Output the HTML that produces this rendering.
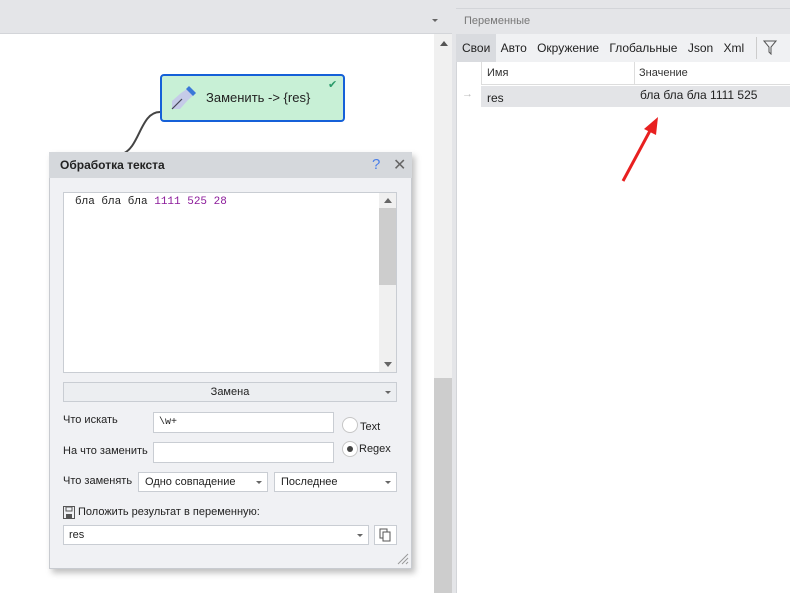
<!DOCTYPE html><html><head><meta charset="utf-8"><style>
*{box-sizing:border-box;margin:0;padding:0}
body{width:790px;height:593px;overflow:hidden;background:#fff;font-family:"Liberation Sans",sans-serif;font-size:12px;color:#222;position:relative}
.a{position:absolute}
.inp{position:absolute;background:#fff;border:1px solid #c9cdd3}
.dd{position:absolute;width:0;height:0;border-left:3px solid transparent;border-right:3px solid transparent;border-top:3px solid #666}
</style></head><body>
<div class="a" style="left:0;top:0;width:455px;height:34px;background:#e4e5e8;border-bottom:1px solid #d3d5d9"></div>
<div class="dd" style="left:432px;top:19px"></div>
<div class="a" style="left:434px;top:34px;width:18px;height:559px;background:#f0f0f0"></div>
<div class="a" style="left:434px;top:378px;width:18px;height:215px;background:#cdcdcd"></div>
<div class="a" style="left:440px;top:41px;border-left:4px solid transparent;border-right:4px solid transparent;border-bottom:5px solid #555"></div>
<div class="a" style="left:452px;top:0;width:4px;height:593px;background:#e4e5e8"></div>
<div class="a" style="left:456px;top:0;width:334px;height:593px;background:#fff;border-left:1px solid #d3d5d9"></div>
<div class="a" style="left:456px;top:0;width:334px;height:8px;background:#e4e5e8"></div>
<div class="a" style="left:456px;top:8px;width:334px;height:26px;background:#e4e5e8;border-top:1px solid #d3d5d9;color:#777;font-size:11px;padding:6px 0 0 8px">Переменные</div>
<div class="a" style="left:456px;top:34px;width:334px;height:28px;background:#f0f1f3"></div>
<div class="a" style="left:456px;top:34px;width:40px;height:28px;background:#d9dbdf"></div>
<div class="a" style="left:462px;top:41px;font-size:12px;word-spacing:7px;color:#222">Свои Авто Окружение Глобальные Json Xml</div>
<div class="a" style="left:756px;top:37px;width:1px;height:22px;background:#ccc"></div>
<svg class="a" style="left:763px;top:40px" width="14" height="15"><path d="M1 1H13L8 7V14L6 12V7Z" fill="none" stroke="#555"/></svg>
<div class="a" style="left:481px;top:62px;width:309px;height:23px;border-left:1px solid #ddd;border-bottom:1px solid #ddd;font-size:11px;color:#333"><span class="a" style="left:5px;top:5px">Имя</span><span class="a" style="left:152px;top:0;width:1px;height:23px;background:#ddd"></span><span class="a" style="left:157px;top:5px">Значение</span></div>
<div class="a" style="left:481px;top:86px;width:309px;height:21px;background:#e3e4e7;font-size:12px"><span class="a" style="left:6px;top:5px">res</span><span class="a" style="left:159px;top:2px">бла бла бла 1111 525</span></div>
<div class="a" style="left:462px;top:88px;color:#bbb;font-size:11px">→</div>
<svg class="a" style="left:618px;top:115px" width="42" height="70"><path d="M5 66L34 12" stroke="#e82020" stroke-width="3"/><path d="M40 2L26 14L38 20Z" fill="#e82020"/></svg>
<svg class="a" style="left:110px;top:108px" width="55" height="50"><path d="M50 4C30 4 30 40 12 46" fill="none" stroke="#444" stroke-width="2"/></svg>
<div class="a" style="left:160px;top:74px;width:185px;height:48px;background:#c8f0d6;border:2px solid #1560d8;border-radius:4px"></div>
<svg class="a" style="left:168px;top:83px" width="30" height="30"><path d="M22 4L28 10L20 17L12 26L4 26L4 18L13 10Z" fill="#c5cbe8"/><path d="M21 3L28 10L25 13L18 6Z" fill="#3a78d8"/><path d="M4 26L14 16" stroke="#445" stroke-width="1.2"/></svg>
<div class="a" style="left:206px;top:90px;font-size:13px;color:#222">Заменить -&gt; {res}</div>
<div class="a" style="left:328px;top:78px;color:#2a9a6a;font-size:11px">✔</div>
<div class="a" style="left:49px;top:152px;width:363px;height:417px;background:#f0f1f4;border:1px solid #c8cbd0;box-shadow:3px 4px 6px rgba(0,0,0,.25)"></div>
<div class="a" style="left:49px;top:152px;width:363px;height:26px;background:#d5d8dc"></div>
<div class="a" style="left:60px;top:158px;font-weight:bold;font-size:12px;color:#222">Обработка текста</div>
<div class="a" style="left:372px;top:156px;color:#4a7ee8;font-size:15px">?</div>
<div class="a" style="left:393px;top:155px;color:#666;font-size:16px">✕</div>
<div class="inp" style="left:63px;top:192px;width:334px;height:181px"></div>
<div class="a" style="left:379px;top:193px;width:17px;height:179px;background:#f0f0f0"></div>
<div class="a" style="left:379px;top:208px;width:17px;height:77px;background:#cdcdcd"></div>
<div class="a" style="left:384px;top:198px;border-left:4px solid transparent;border-right:4px solid transparent;border-bottom:5px solid #666"></div>
<div class="a" style="left:384px;top:362px;border-left:4px solid transparent;border-right:4px solid transparent;border-top:5px solid #666"></div>
<div class="a" style="left:75px;top:196px;font-family:'Liberation Mono',monospace;font-size:11px">бла бла бла <span style="color:#8b1a9a">1111 525 28</span></div>
<div class="a" style="left:63px;top:382px;width:334px;height:20px;background:#eceef1;border:1px solid #c9cdd3;text-align:center;font-size:11px;padding-top:3px">Замена</div>
<div class="dd" style="left:385px;top:391px"></div>
<div class="a" style="left:63px;top:414px;font-size:11px">Что искать</div>
<div class="inp" style="left:153px;top:412px;width:181px;height:21px;font-family:'Liberation Mono',monospace;font-size:10px;padding:4px 0 0 5px">\w+</div>
<div class="a" style="left:342px;top:417px;width:16px;height:16px;border-radius:50%;background:#fff;border:1px solid #c6c6c6"></div>
<div class="a" style="left:360px;top:421px;font-size:11px">Text</div>
<div class="a" style="left:63px;top:445px;font-size:11px">На что заменить</div>
<div class="inp" style="left:153px;top:442px;width:181px;height:21px"></div>
<div class="a" style="left:342px;top:441px;width:16px;height:16px;border-radius:50%;background:#fff;border:1px solid #c6c6c6"></div>
<div class="a" style="left:347px;top:446px;width:6px;height:6px;border-radius:50%;background:#444"></div>
<div class="a" style="left:359px;top:443px;font-size:11px">Regex</div>
<div class="a" style="left:63px;top:475px;font-size:11px">Что заменять</div>
<div class="inp" style="left:138px;top:472px;width:130px;height:20px;font-size:11px;padding:3px 0 0 6px">Одно совпадение</div>
<div class="dd" style="left:256px;top:481px"></div>
<div class="inp" style="left:274px;top:472px;width:123px;height:20px;font-size:11px;padding:3px 0 0 6px">Последнее</div>
<div class="dd" style="left:385px;top:481px"></div>
<svg class="a" style="left:63px;top:506px" width="12" height="13"><rect x=".5" y=".5" width="11" height="12" fill="none" stroke="#555"/><rect x="3" y="1" width="6" height="4" fill="none" stroke="#555"/><rect x="3" y="8" width="6" height="4" fill="#555"/></svg>
<div class="a" style="left:78px;top:506px;font-size:11px">Положить результат в переменную:</div>
<div class="inp" style="left:63px;top:525px;width:306px;height:20px;font-size:11px;padding:3px 0 0 5px">res</div>
<div class="dd" style="left:357px;top:534px"></div>
<div class="inp" style="left:374px;top:525px;width:23px;height:20px"></div>
<svg class="a" style="left:379px;top:528px" width="13" height="14"><rect x="1" y="1" width="7" height="9" fill="#fff" stroke="#555"/><rect x="4" y="4" width="7" height="9" fill="#fff" stroke="#555"/></svg>
<svg class="a" style="left:396px;top:552px" width="13" height="13"><path d="M12 2L2 12M12 6L6 12M12 10L10 12" stroke="#999"/></svg>
</body></html>
